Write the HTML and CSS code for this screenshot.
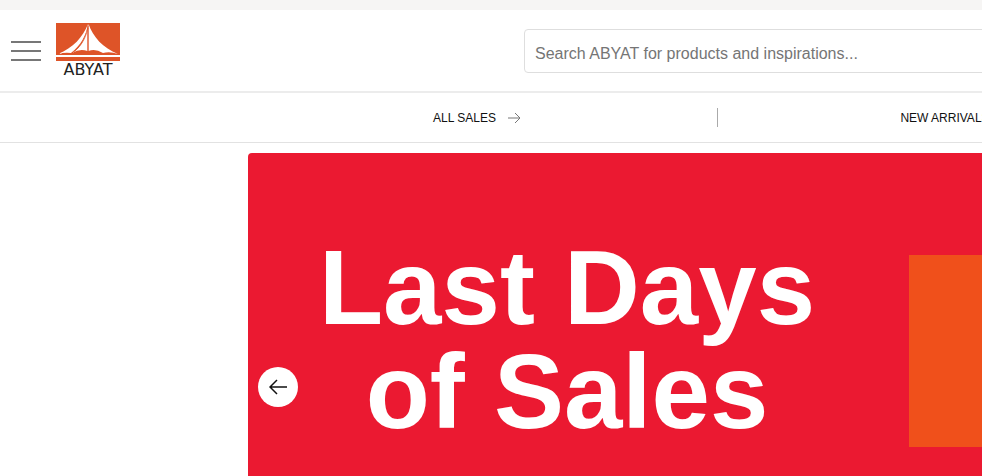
FILE: index.html
```html
<!DOCTYPE html>
<html lang="en">
<head>
<meta charset="utf-8">
<title>ABYAT</title>
<link rel="stylesheet" href="styles.css">
</head>
<body>
<div class="strip"></div>
<header class="header">
  <button class="menu" type="button" aria-label="Menu"><span></span><span></span><span></span></button>
  <a class="logo" href="#">
    <svg class="logo-mark" viewBox="0 0 64 38" aria-hidden="true">
      <path fill="#de5428" d="M0 0h64v32H0zM0 34h64v4H0z"/>
      <path fill="#fff" d="M32 1C27 14 17 25 2 31Q9 29 15 30C25 22 30 13 32 1z"/>
      <path fill="#fff" d="M31.500 5C29 17 24 25 16 30Q24 25 31.500 28z"/>
      <path fill="#fff" d="M32.500 1C37 14 47 25 62 31Q54 28 47 30Q39 25 32.500 28z"/>
      <path fill="none" stroke="#de5428" stroke-width=".8" d="M32 5C29 17 24 25 15 31M32 3v26"/>
    </svg>
    <span class="logo-name">ABYAT</span>
  </a>
  <form class="search">
    <input class="search-input" type="search" aria-label="Search" placeholder="Search ABYAT for products and inspirations...">
  </form>
</header>
<nav class="nav">
  <a class="nav-link" href="#">ALL SALES
    <svg class="nav-arrow" viewBox="0 0 14 12" aria-hidden="true"><path d="M1 6h12M8 1l5 5-5 5"/></svg>
  </a>
  <a class="nav-link" href="#">NEW ARRIVALS
    <svg class="nav-arrow" viewBox="0 0 14 12" aria-hidden="true"><path d="M1 6h12M8 1l5 5-5 5"/></svg>
  </a>
</nav>
<main class="banner">
  <h1 class="banner-title">Last Days<br>of Sales</h1>
  <div class="banner-panel"></div>
  <button class="prev" type="button" aria-label="Previous">
    <svg viewBox="0 0 18 16" width="18" height="16" aria-hidden="true"><path d="M18 8H1M8 1L1 8l7 7"/></svg>
  </button>
</main>
</body>
</html>
```

FILE: styles.css
```css
* {
  box-sizing: border-box;
}

body {
  display: flex;
  flex-direction: column;
  min-height: 100vh;
  margin: 0;
  overflow: hidden;
  background: #fff;
  font-family: "Liberation Sans", Arial, sans-serif;
}

.strip {
  height: 10px;
  background: #f6f5f4;
}

.header {
  display: flex;
  align-items: center;
  padding: 13px 0 12px 11px;
  border-bottom: 2px solid #ececec;
}

.menu {
  display: flex;
  flex-direction: column;
  gap: 7px;
  width: 30px;
  padding: 0;
  border: 0;
  background: none;
}

.menu span {
  height: 2px;
  background: #777;
}

.logo {
  display: flex;
  flex-direction: column;
  align-items: center;
  width: 64px;
  margin-left: 15px;
  color: #222;
  text-decoration: none;
}

.logo-mark {
  width: 64px;
  height: 38px;
}

.logo-name {
  font: 16px/18px "DejaVu Sans", sans-serif;
}

.search {
  flex: 1;
  margin: 0 -10px 0 404px;
}

.search-input {
  display: block;
  width: 100%;
  height: 44px;
  padding: 6px 10px 0;
  border: 1px solid #dedede;
  border-radius: 4px;
  background: #fff;
  font: 16px "Liberation Sans", Arial, sans-serif;
  appearance: none;
}

.search-input::placeholder {
  color: #757575;
}

.nav {
  display: flex;
  align-items: center;
  padding: 15px 0 15px 237px;
  border-bottom: 1px solid #e2e2e2;
}

.nav-link {
  display: flex;
  flex: 0 0 480px;
  align-items: center;
  justify-content: center;
  gap: 11px;
  height: 19px;
  color: #111;
  font-size: 12px;
  text-decoration: none;
}

.nav-link + .nav-link {
  border-left: 1px solid #aaa;
}

.nav-arrow {
  width: 14px;
  height: 12px;
  fill: none;
  stroke: #777;
}

.banner {
  position: relative;
  display: grid;
  flex: 1;
  grid-template-columns: 638px 1fr;
  gap: 23px;
  align-items: start;
  margin: 10px 0 0 248px;
  padding-top: 83px;
  border-top-left-radius: 4px;
  background: #eb1931;
}

.banner-title {
  margin: 0;
  color: #fff;
  font-size: 105px;
  line-height: 104px;
  text-align: center;
}

.banner-panel {
  height: 192px;
  margin-top: 19px;
  background: #f0501b;
}

.prev {
  position: absolute;
  top: 214px;
  left: 10px;
  display: flex;
  align-items: center;
  justify-content: center;
  width: 40px;
  height: 40px;
  padding: 0;
  border: 0;
  border-radius: 50%;
  background: #fff;
}

.prev svg {
  fill: none;
  stroke: #111;
  stroke-width: 1.5;
}
```
